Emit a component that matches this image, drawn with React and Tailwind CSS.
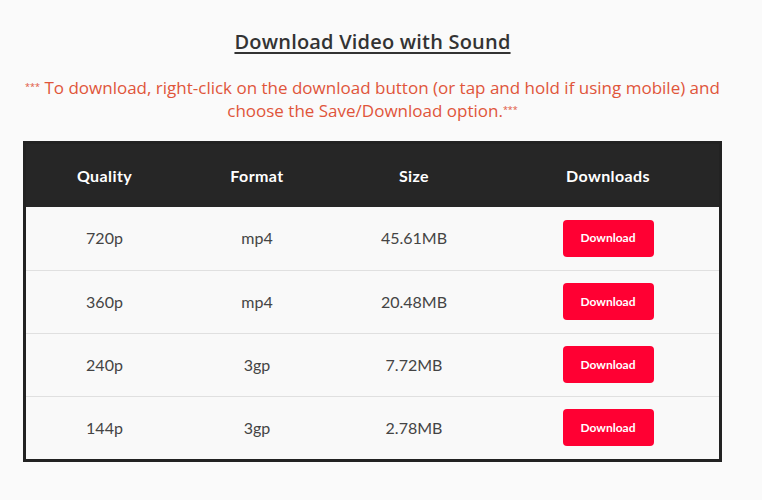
import React from 'react';

const rows = [
    { quality: '720p', format: 'mp4', size: '45.61MB' },
    { quality: '360p', format: 'mp4', size: '20.48MB' },
    { quality: '240p', format: '3gp', size: '7.72MB' },
    { quality: '144p', format: '3gp', size: '2.78MB' },
];

export default function App() {
    return (
        <div className="min-h-[500px] w-[762px] bg-[#fafafa] font-['Lato',sans-serif]">
            <div className="w-[745px] pt-[29px] text-center font-['Open_Sans',sans-serif]">
                <h2 className="text-[20px] leading-[26px] font-semibold text-[#333] tracking-[0.2px] underline underline-offset-[3px] decoration-[1.5px]">
                    Download Video with Sound
                </h2>
                <p className="mt-[21px] whitespace-nowrap text-[17px] leading-[23px] text-[#e0553a]">
                    <sup className="text-[9px]">***</sup> To download, right-click on the download button (or tap and hold if using mobile) and
                    <br />
                    choose the Save/Download option.<sup className="text-[9px]">***</sup>
                </p>
            </div>
            <div className="ml-[23px] mt-[19px] w-[699px] border-[3px] border-[#222]">
                <table className="w-full table-fixed border-collapse text-center">
                    <colgroup>
                        <col className="w-[157px]" />
                        <col className="w-[148px]" />
                        <col className="w-[166px]" />
                        <col />
                    </colgroup>
                    <thead>
                        <tr className="h-[63px] bg-[#262626] text-[16px] font-bold text-white tracking-[0.4px]">
                            <th>Quality</th>
                            <th>Format</th>
                            <th>Size</th>
                            <th>Downloads</th>
                        </tr>
                    </thead>
                    <tbody>
                        {rows.map((r, i) => (
                            <tr key={i} className={`h-[63px] bg-[#f9f9f9] text-[16px] text-[#444] ${i < rows.length - 1 ? 'border-b border-[#e0e0e0]' : ''}`}>
                                <td>{r.quality}</td>
                                <td>{r.format}</td>
                                <td>{r.size}</td>
                                <td>
                                    <button className="h-[37px] w-[91px] rounded-[4px] bg-[#ff0033] text-[12px] font-bold text-white">
                                        Download
                                    </button>
                                </td>
                            </tr>
                        ))}
                    </tbody>
                </table>
            </div>
        </div>
    );
}
